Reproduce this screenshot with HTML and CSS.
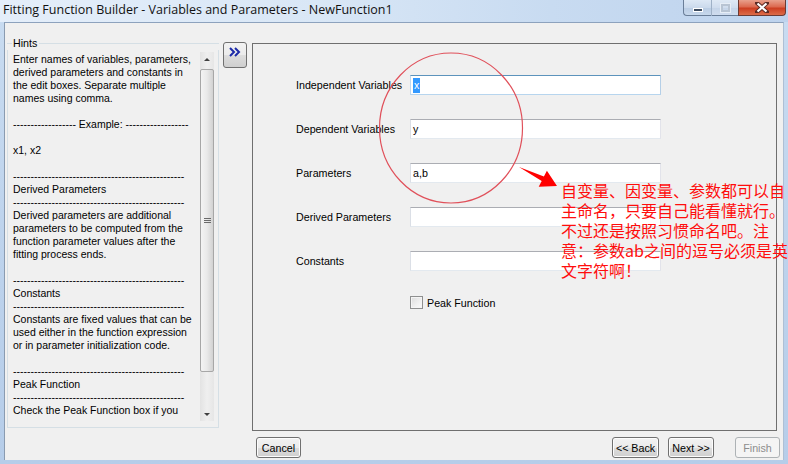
FILE: index.html
```html
<!DOCTYPE html>
<html>
<head>
<meta charset="utf-8">
<link rel="stylesheet" href="styles.css">
</head>
<body>
<div class="window">
  <div class="titlebar">
    <div class="title">Fitting Function Builder - Variables and Parameters - NewFunction1</div>
    <div class="caption-btns">
      <div class="cbtn cbtn-min"><span class="min-glyph"></span></div>
      <div class="cbtn cbtn-max"><span class="max-glyph"></span></div>
      <div class="cbtn cbtn-close">
        <svg width="14" height="11" viewBox="0 0 14 11"><path d="M2 1 L12 10 M12 1 L2 10" stroke="#5a2a24" stroke-width="4" stroke-linecap="square"/><path d="M2.5 1.5 L11.5 9.5 M11.5 1.5 L2.5 9.5" stroke="#ffffff" stroke-width="2.2"/></svg>
      </div>
    </div>
  </div>
  <div class="client">
    <div class="main">
      <div class="hints">
        <div class="hints-head"><span class="hl-lead"></span><span class="hints-label">Hints</span><span class="hl-line"></span></div>
        <div class="hints-body">
          <div class="hints-text">
            <div class="ln">Enter names of variables, parameters,</div>
            <div class="ln">derived parameters and constants in</div>
            <div class="ln">the edit boxes. Separate multiple</div>
            <div class="ln">names using comma.</div>
            <div class="ln"></div>
            <div class="ln">------------------ Example: ------------------</div>
            <div class="ln"></div>
            <div class="ln">x1, x2</div>
            <div class="ln"></div>
            <div class="ln">-------------------------------------------------</div>
            <div class="ln">Derived Parameters</div>
            <div class="ln">-------------------------------------------------</div>
            <div class="ln">Derived parameters are additional</div>
            <div class="ln">parameters to be computed from the</div>
            <div class="ln">function parameter values after the</div>
            <div class="ln">fitting process ends.</div>
            <div class="ln"></div>
            <div class="ln">-------------------------------------------------</div>
            <div class="ln">Constants</div>
            <div class="ln">-------------------------------------------------</div>
            <div class="ln">Constants are fixed values that can be</div>
            <div class="ln">used either in the function expression</div>
            <div class="ln">or in parameter initialization code.</div>
            <div class="ln"></div>
            <div class="ln">-------------------------------------------------</div>
            <div class="ln">Peak Function</div>
            <div class="ln">-------------------------------------------------</div>
            <div class="ln">Check the Peak Function box if you</div>
          </div>
          <div class="scrollbar">
            <div class="sb-arrow"><span class="tri-up"></span></div>
            <div class="sb-thumb"><span class="grip"></span></div>
            <div class="sb-track"></div>
            <div class="sb-arrow"><span class="tri-down"></span></div>
          </div>
        </div>
      </div>
      <div class="expand">
        <svg width="12" height="10" viewBox="0 0 12 10"><path d="M1 1 L5 5 L1 9 M6 1 L10 5 L6 9" fill="none" stroke="#1c2aa8" stroke-width="2"/></svg>
      </div>
      <div class="panel">
        <div class="form">
          <div class="row"><span class="lbl">Independent Variables</span><span class="edit focused"><span class="sel">x</span></span></div>
          <div class="row"><span class="lbl">Dependent Variables</span><span class="edit">y</span></div>
          <div class="row"><span class="lbl">Parameters</span><span class="edit">a,b</span></div>
          <div class="row"><span class="lbl">Derived Parameters</span><span class="edit"></span></div>
          <div class="row"><span class="lbl">Constants</span><span class="edit"></span></div>
          <div class="row check-row"><span class="checkbox"></span><span class="chk-lbl">Peak Function</span></div>
        </div>
      </div>
    </div>
    <div class="footer">
      <div class="btn btn-cancel">Cancel</div>
      <div class="btn btn-back">&lt;&lt; Back</div>
      <div class="btn btn-next">Next &gt;&gt;</div>
      <div class="btn btn-finish disabled">Finish</div>
    </div>
  </div>
  <svg class="annot" width="788" height="464" viewBox="0 0 788 464">
    <ellipse cx="451" cy="128" rx="71.5" ry="75" fill="none" stroke="#e0505a" stroke-width="1.2"/>
    <path d="M519 167 L543.9 176.5 L546.9 170.7 L557 186 L538.7 186.7 L541.7 180.9 Z" fill="#ff0000"/>
  </svg>
  <div class="note">自变量、因变量、参数都可以自<br>主命名，只要自己能看懂就行。<br>不过还是按照习惯命名吧。注<br>意：参数ab之间的逗号必须是英<br>文字符啊！</div>
</div>
</body>
</html>
```

FILE: styles.css
```css
* { box-sizing: border-box; }
html, body { margin: 0; padding: 0; }
body {
  width: 788px;
  height: 464px;
  overflow: hidden;
  font-family: "Liberation Sans", Arial, sans-serif;
  font-size: 10.7px;
  color: #000;
}
.window {
  position: relative;
  width: 788px;
  height: 464px;
  display: flex;
  flex-direction: column;
  background: linear-gradient(180deg, #c9dcf1 0%, #bcd2ec 60%, #b6cde9 100%);
}
.titlebar {
  height: 22px;
  display: flex;
  align-items: flex-start;
  background: linear-gradient(90deg, #e4eefa 0%, #d9e7f6 40%, #c8dbf1 70%, #bed3ed 100%);
}
.title {
  font-family: "Open Sans", "Noto Sans", sans-serif;
  font-size: 12.5px;
  line-height: 16px;
  padding: 2px 0 0 3px;
  color: #111;
  white-space: nowrap;
}
.caption-btns {
  margin-left: auto;
  margin-right: 2px;
  display: flex;
  height: 16px;
}
.cbtn {
  height: 16px;
  display: flex;
  align-items: center;
  justify-content: center;
  border: 1px solid #6a7e98;
  border-top: none;
}
.cbtn-min {
  width: 29px;
  border-radius: 0 0 0 4px;
  border-right: 1px solid #9fb1c7;
  background: linear-gradient(180deg, #dde8f5 0%, #cbdaec 50%, #b9cce3 51%, #c7d8ec 100%);
}
.min-glyph {
  display: block;
  width: 10px;
  height: 4px;
  margin-top: 5px;
  background: #3b4a5e;
  border: 1px solid #ffffff;
}
.cbtn-max {
  width: 26px;
  border-left: none;
  border-right: none;
  background: linear-gradient(180deg, #dfe9f5 0%, #d0ddee 50%, #c4d4e8 51%, #cfdcee 100%);
}
.max-glyph {
  display: block;
  width: 9px;
  height: 8px;
  border: 2px solid #b8c4d3;
  box-shadow: 0 0 0 1px #e6edf6;
}
.cbtn-close {
  width: 48px;
  border-radius: 0 0 4px 0;
  background: linear-gradient(180deg, #e8a08c 0%, #dc6a50 45%, #cc3f22 55%, #dc6c48 100%);
  border-color: #6b3b34;
}
.client {
  flex: 1;
  margin: 0 4px 4px 4px;
  background: #f0f0f0;
  border-top: 1px solid #8da2bd;
  border-left: 1px solid #8a9bb0;
  border-right: 1px solid #aebfd4;
  display: flex;
  flex-direction: column;
}
.main {
  display: flex;
  align-items: flex-start;
}
.hints {
  width: 212px;
  margin-left: 2px;
  margin-top: 13px;
}
.hints-head {
  height: 14px;
  display: flex;
  align-items: center;
}
.hl-lead {
  width: 5px;
  height: 1px;
  background: #d5dfe5;
  align-self: center;
  margin-top: 1px;
}
.hints-label {
  padding: 0 2px 0 1px;
  line-height: 14px;
}
.hl-line {
  flex: 1;
  height: 1px;
  background: #d5dfe5;
  margin-top: 1px;
}
.hints-body {
  height: 378px;
  display: flex;
  border: 1px solid #d5dfe5;
  border-top: none;
}
.hints-text {
  flex: 1;
  padding: 3px 0 0 5px;
  overflow: hidden;
  height: 370px;
  font-size: 10.5px;
}
.ln {
  height: 13px;
  line-height: 13px;
  white-space: nowrap;
}
.scrollbar {
  width: 14px;
  margin: 2px 4px 0 0;
  height: 369px;
  display: flex;
  flex-direction: column;
  background: linear-gradient(90deg, #e3e3e3, #efefef 50%, #e6e6e6);
}
.sb-arrow {
  height: 14px;
  display: flex;
  align-items: center;
  justify-content: center;
}
.tri-up {
  width: 0; height: 0;
  border-left: 3px solid transparent;
  border-right: 3px solid transparent;
  border-bottom: 3px solid #404040;
}
.tri-down {
  width: 0; height: 0;
  border-left: 3px solid transparent;
  border-right: 3px solid transparent;
  border-top: 3px solid #404040;
}
.sb-thumb {
  height: 303px;
  margin: 3px 0 0 0;
  border: 1px solid #a7a7a7;
  border-radius: 2px;
  background: linear-gradient(90deg, #f4f4f4 0%, #e9e9e9 50%, #d2d2d2 100%);
  display: flex;
  align-items: center;
  justify-content: center;
}
.grip {
  display: block;
  width: 7px;
  height: 5px;
  border-top: 1px solid #6a6a6a;
  border-bottom: 1px solid #6a6a6a;
  background: linear-gradient(180deg, transparent 1px, #6a6a6a 1px, #6a6a6a 2px, transparent 2px);
}
.sb-track { flex: 1; }
.expand {
  width: 24px;
  height: 26px;
  margin: 19px 0 0 4px;
  border: 1px solid #707070;
  border-radius: 3px;
  background: linear-gradient(180deg, #f2f2f2 0%, #ebebeb 50%, #dddddd 51%, #cfcfcf 100%);
  display: flex;
  align-items: center;
  justify-content: center;
  padding-bottom: 6px;
}
.panel {
  width: 525px;
  height: 388px;
  margin: 20px 0 0 5px;
  border: 1px solid #6f6f6f;
}
.form {
  padding: 31px 0 0 43px;
  display: flex;
  flex-direction: column;
  gap: 24px;
}
.row {
  display: flex;
  align-items: center;
  height: 20px;
}
.lbl {
  width: 114px;
  white-space: nowrap;
}
.edit {
  width: 251px;
  height: 20px;
  background: #fff;
  border: 1px solid;
  border-color: #abadb3 #e2e3ea #e3e9ef #dbdfe6;
  padding: 0 0 0 2px;
  line-height: 18px;
  display: flex;
  align-items: center;
}
.edit.focused {
  border-color: #5c93bc #b5cfe7 #b7d5ee #c0d8ee;
}
.sel {
  background: #3399ff;
  color: #fff;
  line-height: 15px;
  padding: 0 1px;
}
.check-row {
  margin-top: 1px;
  height: 13px;
  padding-left: 114px;
}
.checkbox {
  width: 13px;
  height: 13px;
  border: 1px solid #8e8f8f;
  background: linear-gradient(135deg, #dcdcdc 0%, #f0f0f0 60%, #fafafa 100%);
  box-shadow: inset 0 0 0 1px #f4f4f4;
}
.chk-lbl { margin-left: 4px; }
.footer {
  display: flex;
  margin-top: 6px;
  padding-left: 251px;
  padding-right: 3px;
}
.btn {
  height: 21px;
  border: 1px solid #707070;
  border-radius: 3px;
  background: linear-gradient(180deg, #f2f2f2 0%, #ebebeb 50%, #dddddd 51%, #cfcfcf 100%);
  display: flex;
  align-items: center;
  justify-content: center;
  white-space: nowrap;
  box-shadow: inset 0 0 0 1px #fcfcfc;
}
.btn-cancel { width: 45px; }
.btn-back { width: 47px; margin-left: auto; }
.btn-next { width: 46px; margin-left: 9px; }
.btn-finish { width: 45px; margin-left: 21px; }
.btn.disabled {
  border-color: #adb2b5;
  background: #f4f4f4;
  color: #8d8d8d;
  box-shadow: none;
}
.annot {
  position: absolute;
  left: 0;
  top: 0;
  pointer-events: none;
}
.note {
  position: absolute;
  left: 561px;
  top: 180px;
  width: 228px;
  font-family: "Noto Sans CJK SC", "Noto Sans", sans-serif;
  font-size: 16px;
  line-height: 20px;
  color: #ff0d0d;
  white-space: nowrap;
}
```
